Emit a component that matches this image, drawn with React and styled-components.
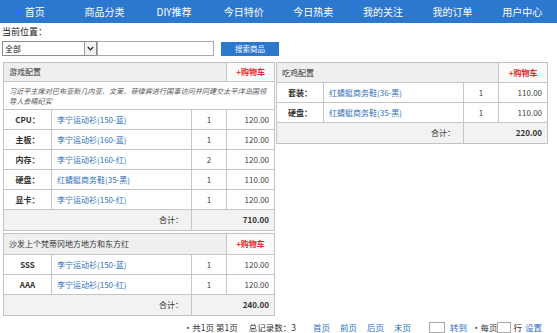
import React from 'react'
import styled, { createGlobalStyle } from 'styled-components'

const GlobalStyle = createGlobalStyle`
  html, body {
    margin: 0;
    padding: 0;
    background: #fff;
  }
  body {
    font-family: "Noto Sans CJK SC", "Liberation Sans", sans-serif;
    color: #333;
  }
`

const Page = styled.div`
  width: 557px;
`

const Nav = styled.ul`
  display: flex;
  margin: 0;
  padding: 0;
  list-style: none;
  height: 23px;
  background: #2b78ce;
`

const NavItem = styled.li`
  flex: 1;
  text-align: center;
  line-height: 23px;
  font-size: 10px;
  color: #fff;
`

const Location = styled.div`
  padding: 2px 2px 0;
  font-size: 9px;
  line-height: 14px;
  color: #222;
`

const SearchRow = styled.div`
  display: flex;
  align-items: center;
  padding: 2px 2px 0;
  height: 15px;
`

const SelectBox = styled.div`
  display: flex;
  width: 95px;
  height: 15px;
  box-sizing: border-box;
  border: 1px solid #8c8c8c;
  background: #fff;
`

const Select = styled.select`
  flex: 1;
  min-width: 0;
  appearance: none;
  border: none;
  outline: none;
  background: transparent;
  padding: 0 2px;
  font-family: inherit;
  font-size: 8px;
  color: #222;
`

const SelectArrow = styled.span`
  width: 11px;
  display: flex;
  align-items: center;
  justify-content: center;
  border-left: 1px solid #9a9a9a;
  background: #f2f2f2;
`

const Input = styled.input`
  width: ${({ $w }) => $w}px;
  height: ${({ $h }) => $h}px;
  box-sizing: border-box;
  border: 1px solid #a9a9a9;
  padding: 0;
  outline: none;
`

const SearchButton = styled.button`
  margin-left: 7px;
  width: 58px;
  height: 14px;
  border: none;
  padding: 0;
  background: #2b78ce;
  color: #fff;
  font-family: inherit;
  font-size: 7.5px;
  line-height: 14px;
`

const Columns = styled.div`
  display: flex;
  align-items: flex-start;
  gap: 3px;
  padding: 6px 3px 0;
`

const Column = styled.div`
  width: 270px;
  display: flex;
  flex-direction: column;
  gap: 2px;
`

const Table = styled.table`
  width: 270px;
  table-layout: fixed;
  border-collapse: separate;
  border-spacing: 0;
  border: 1px solid #c2c2c2;
  font-size: 8px;
  line-height: 10px;

  td {
    padding: 0;
    border-right: 1px solid #c6c6c6;
    border-bottom: 1px solid #c6c6c6;
  }
  td:last-child {
    border-right: none;
  }
  tr:last-child td {
    border-bottom: none;
  }
`

const Row = styled.tr`
  height: ${({ $h }) => $h}px;
`

const TitleCell = styled.td`
  background: #efefef;
  padding-left: 5px !important;
  color: #333;
`

const CartCell = styled.td`
  background: #fafafa;
  text-align: center;
  color: #e4262d;
  font-weight: 600;
`

const DescCell = styled.td`
  padding: 4px 4px 3px 5px !important;
  font-size: 7.15px;
  line-height: 10px;
  font-style: italic;
  color: #555;
`

const LabelCell = styled.td`
  text-align: center;
  font-weight: 700;
  color: #333;
`

const ProductCell = styled.td`
  padding-left: 5px !important;
  color: #2e6fc0;
  white-space: nowrap;
`

const QtyCell = styled.td`
  text-align: center;
  color: #444;
`

const PriceCell = styled.td`
  text-align: right;
  padding-right: 5px !important;
  color: #444;
`

const TotalLabel = styled.td`
  background: #f2f2f2;
  text-align: right;
  padding-right: 8px !important;
  color: #333;
`

const TotalValue = styled.td`
  background: #f2f2f2;
  text-align: right;
  padding-right: 5px !important;
  font-weight: 700;
  color: #333;
`

const Pager = styled.div`
  display: flex;
  align-items: center;
  justify-content: flex-end;
  padding: 4px 15px 0 0;
  height: 14px;
  font-size: 8.5px;
  color: #333;
`

const PagerText = styled.span`
  margin-left: ${({ $ml }) => $ml || 0}px;
  white-space: pre;
`

const PagerLink = styled.a`
  margin-left: ${({ $ml }) => $ml || 0}px;
  color: #2e6fc0;
  text-decoration: none;
`

const configs = [
  {
    id: 'game',
    title: '游戏配置',
    desc: '习近平主席对巴布亚新几内亚、文莱、菲律宾进行国事访问并同建交太平洋岛国领导人会晤纪实',
    items: [
      { label: 'CPU：', name: '李宁运动衫(150-蓝)', qty: 1, price: '120.00' },
      { label: '主板：', name: '李宁运动衫(160-蓝)', qty: 1, price: '120.00' },
      { label: '内存：', name: '李宁运动衫(160-红)', qty: 2, price: '120.00' },
      { label: '硬盘：', name: '红蜻蜓商务鞋(35-黑)', qty: 1, price: '110.00' },
      { label: '显卡：', name: '李宁运动衫(150-红)', qty: 1, price: '120.00' },
    ],
    total: '710.00',
    cols: [48, 140, 35, 47],
    rowH: 20,
    headH: 19,
  },
  {
    id: 'sofa',
    title: '沙发上个梵蒂冈地方地方和东方红',
    items: [
      { label: 'SSS', name: '李宁运动衫(150-蓝)', qty: 1, price: '120.00' },
      { label: 'AAA', name: '李宁运动衫(150-红)', qty: 1, price: '120.00' },
    ],
    total: '240.00',
    cols: [48, 140, 35, 47],
    rowH: 20,
    headH: 21,
  },
  {
    id: 'eat',
    title: '吃鸡配置',
    items: [
      { label: '套装：', name: '红蜻蜓商务鞋(36-黑)', qty: 1, price: '110.00' },
      { label: '硬盘：', name: '红蜻蜓商务鞋(35-黑)', qty: 1, price: '110.00' },
    ],
    total: '220.00',
    cols: [47, 140, 35, 48],
    rowH: 20,
    headH: 20,
  },
]

const ConfigTable = ({ config }) => (
  <Table>
    <colgroup>
      {config.cols.map((w, i) => (
        <col key={i} style={{ width: w }} />
      ))}
    </colgroup>
    <tbody>
      <Row $h={config.headH}>
        <TitleCell colSpan={3}>{config.title}</TitleCell>
        <CartCell>+购物车</CartCell>
      </Row>
      {config.desc && (
        <Row $h={27}>
          <DescCell colSpan={4}>{config.desc}</DescCell>
        </Row>
      )}
      {config.items.map((item, i) => (
        <Row key={i} $h={config.rowH}>
          <LabelCell>{item.label}</LabelCell>
          <ProductCell>{item.name}</ProductCell>
          <QtyCell>{item.qty}</QtyCell>
          <PriceCell>{item.price}</PriceCell>
        </Row>
      ))}
      <Row $h={config.rowH}>
        <TotalLabel colSpan={2}>合计：</TotalLabel>
        <TotalValue colSpan={2}>{config.total}</TotalValue>
      </Row>
    </tbody>
  </Table>
)

const navItems = ['首页', '商品分类', 'DIY推荐', '今日特价', '今日热卖', '我的关注', '我的订单', '用户中心']

export default function App() {
  return (
    <Page>
      <GlobalStyle />
      <Nav>
        {navItems.map((n) => (
          <NavItem key={n}>{n}</NavItem>
        ))}
      </Nav>
      <Location>当前位置：</Location>
      <SearchRow>
        <SelectBox>
          <Select defaultValue="all">
            <option value="all">全部</option>
          </Select>
          <SelectArrow>
            <svg width="7" height="5" viewBox="0 0 7 5">
              <path d="M0.8 1 L3.5 3.8 L6.2 1" fill="none" stroke="#222" strokeWidth="1.2" />
            </svg>
          </SelectArrow>
        </SelectBox>
        <Input $w={117} $h={15} />
        <SearchButton>搜索商品</SearchButton>
      </SearchRow>
      <Columns>
        <Column>
          <ConfigTable config={configs[0]} />
          <ConfigTable config={configs[1]} />
        </Column>
        <Column>
          <ConfigTable config={configs[2]} />
        </Column>
      </Columns>
      <Pager>
        <PagerText>·共1页 第1页</PagerText>
        <PagerText $ml={11}>总记录数：3</PagerText>
        <PagerLink $ml={17}>首页</PagerLink>
        <PagerLink $ml={10}>前页</PagerLink>
        <PagerLink $ml={10}>后页</PagerLink>
        <PagerLink $ml={10}>末页</PagerLink>
        <Input $w={16} $h={11} style={{ marginLeft: 18 }} />
        <PagerLink $ml={5}>转到</PagerLink>
        <PagerText $ml={5}>·每页</PagerText>
        <Input $w={14} $h={11} />
        <PagerText $ml={2}>行</PagerText>
        <PagerLink $ml={3}>设置</PagerLink>
      </Pager>
    </Page>
  )
}
